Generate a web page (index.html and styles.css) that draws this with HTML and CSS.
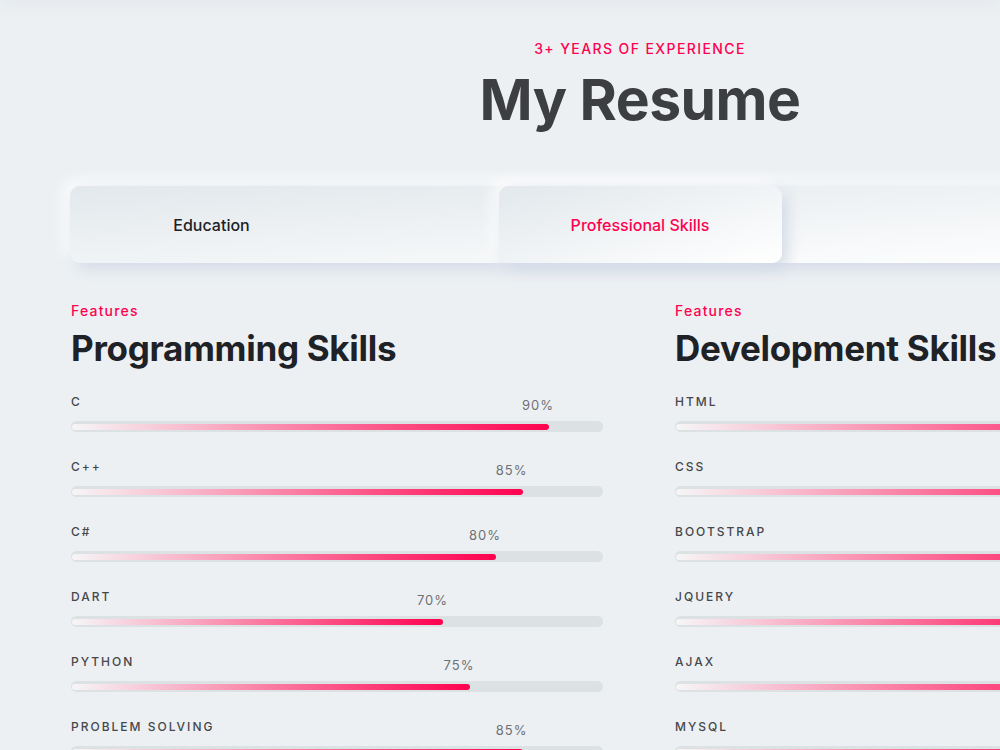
FILE: index.html
```html
<!DOCTYPE html>
<html lang="en">
<head>
    <meta charset="UTF-8">
    <meta name="viewport" content="width=device-width, initial-scale=1.0">
    <title>My Resume</title>
    <link rel="stylesheet" href="styles.css">
</head>
<body>

<div class="topbar"></div>

<div class="page">
    <div class="container">
        <div class="section-title">
            <span class="subtitle">3+ YEARS OF EXPERIENCE</span>
            <h2>My Resume</h2>
        </div>

        <ul class="tabs">
            <li class="tab">Education</li>
            <li class="tab active">Professional Skills</li>
            <li class="tab">Experience</li>
        </ul>

        <div class="skills">
            <div class="skill-col">
                <span class="features">Features</span>
                <h4>Programming Skills</h4>

                <div class="skill">
                    <div class="skill-name">C</div>
                    <div class="track"><div class="fill" style="width: 90%"><span class="pct">90%</span></div></div>
                </div>
                <div class="skill">
                    <div class="skill-name">C++</div>
                    <div class="track"><div class="fill" style="width: 85%"><span class="pct">85%</span></div></div>
                </div>
                <div class="skill">
                    <div class="skill-name">C#</div>
                    <div class="track"><div class="fill" style="width: 80%"><span class="pct">80%</span></div></div>
                </div>
                <div class="skill">
                    <div class="skill-name">DART</div>
                    <div class="track"><div class="fill" style="width: 70%"><span class="pct">70%</span></div></div>
                </div>
                <div class="skill">
                    <div class="skill-name">PYTHON</div>
                    <div class="track"><div class="fill" style="width: 75%"><span class="pct">75%</span></div></div>
                </div>
                <div class="skill">
                    <div class="skill-name">PROBLEM SOLVING</div>
                    <div class="track"><div class="fill" style="width: 85%"><span class="pct">85%</span></div></div>
                </div>
            </div>

            <div class="skill-col">
                <span class="features">Features</span>
                <h4>Development Skills</h4>

                <div class="skill">
                    <div class="skill-name">HTML</div>
                    <div class="track"><div class="fill" style="width: 95%"><span class="pct">95%</span></div></div>
                </div>
                <div class="skill">
                    <div class="skill-name">CSS</div>
                    <div class="track"><div class="fill" style="width: 90%"><span class="pct">90%</span></div></div>
                </div>
                <div class="skill">
                    <div class="skill-name">BOOTSTRAP</div>
                    <div class="track"><div class="fill" style="width: 85%"><span class="pct">85%</span></div></div>
                </div>
                <div class="skill">
                    <div class="skill-name">JQUERY</div>
                    <div class="track"><div class="fill" style="width: 80%"><span class="pct">80%</span></div></div>
                </div>
                <div class="skill">
                    <div class="skill-name">AJAX</div>
                    <div class="track"><div class="fill" style="width: 85%"><span class="pct">85%</span></div></div>
                </div>
                <div class="skill">
                    <div class="skill-name">MYSQL</div>
                    <div class="track"><div class="fill" style="width: 80%"><span class="pct">80%</span></div></div>
                </div>
            </div>
        </div>
    </div>
</div>

</body>
</html>
```

FILE: styles.css
```css
html, body {
    overflow: hidden;
}
body {
    margin: 0;
    font-family: Inter, "Open Sans", sans-serif;
    background-color: #ecf0f3;
}
.topbar {
    position: fixed;
    top: 0;
    left: 0;
    right: 0;
    height: 0;
    box-shadow: 0 0 16px 2px rgba(60, 70, 90, 0.12);
}
.page {
    width: 1280px;
}
.container {
    width: 1140px;
    margin: 0 auto;
    padding-top: 40px;
}
.section-title {
    text-align: center;
}
.subtitle {
    display: block;
    font-size: 14px;
    line-height: 18px;
    font-weight: 500;
    letter-spacing: 1.4px;
    color: #ff014f;
}
.section-title h2 {
    margin: 6px 0 0;
    font-size: 57px;
    line-height: 72px;
    font-weight: 700;
    color: #3c3e41;
    letter-spacing: -0.5px;
}
.tabs {
    list-style: none;
    margin: 50px 0 0;
    padding: 0;
    display: flex;
    justify-content: space-between;
    height: 77px;
    border-radius: 10px;
    background: linear-gradient(to right bottom, #e2e8ec, #ffffff);
    box-shadow: 5px 5px 15px #d1d9e6, -5px -5px 15px #ffffff;
}
.tab {
    width: 283px;
    display: flex;
    align-items: center;
    justify-content: center;
    font-size: 16px;
    font-weight: 500;
    color: #1e2125;
    border-radius: 10px;
}
.tab.active {
    color: #ff014f;
    background: linear-gradient(to right bottom, #e2e8ec, #ffffff);
    box-shadow: 5px 5px 15px #d1d9e6, -5px -5px 15px #ffffff;
}
.skills {
    display: grid;
    grid-template-columns: 532px 1fr;
    column-gap: 72px;
    margin-top: 39px;
    padding-left: 1px;
}
.features {
    display: block;
    font-size: 14px;
    line-height: 18px;
    font-weight: 500;
    letter-spacing: 1.2px;
    color: #ff014f;
}
.skill-col h4 {
    margin: 7px 0 24px;
    font-size: 35px;
    line-height: 43px;
    font-weight: 700;
    color: #1e2125;
    letter-spacing: -0.3px;
}
.skill {
    margin-bottom: 27px;
}
.skill-name {
    font-size: 12px;
    line-height: 16px;
    font-weight: 500;
    letter-spacing: 2px;
    color: #45474b;
}
.track {
    margin-top: 11px;
    height: 11px;
    box-sizing: border-box;
    padding: 2.5px 1px;
    border-radius: 6px;
    background: #dce1e4;
}
.fill {
    position: relative;
    height: 6px;
    border-radius: 6px;
    background: linear-gradient(to right, #f6f6f6 0%, #ff014f 100%);
}
.pct {
    position: absolute;
    right: -5px;
    bottom: 17px;
    font-size: 13px;
    line-height: 16px;
    letter-spacing: 1px;
    color: #6f7074;
}
```
